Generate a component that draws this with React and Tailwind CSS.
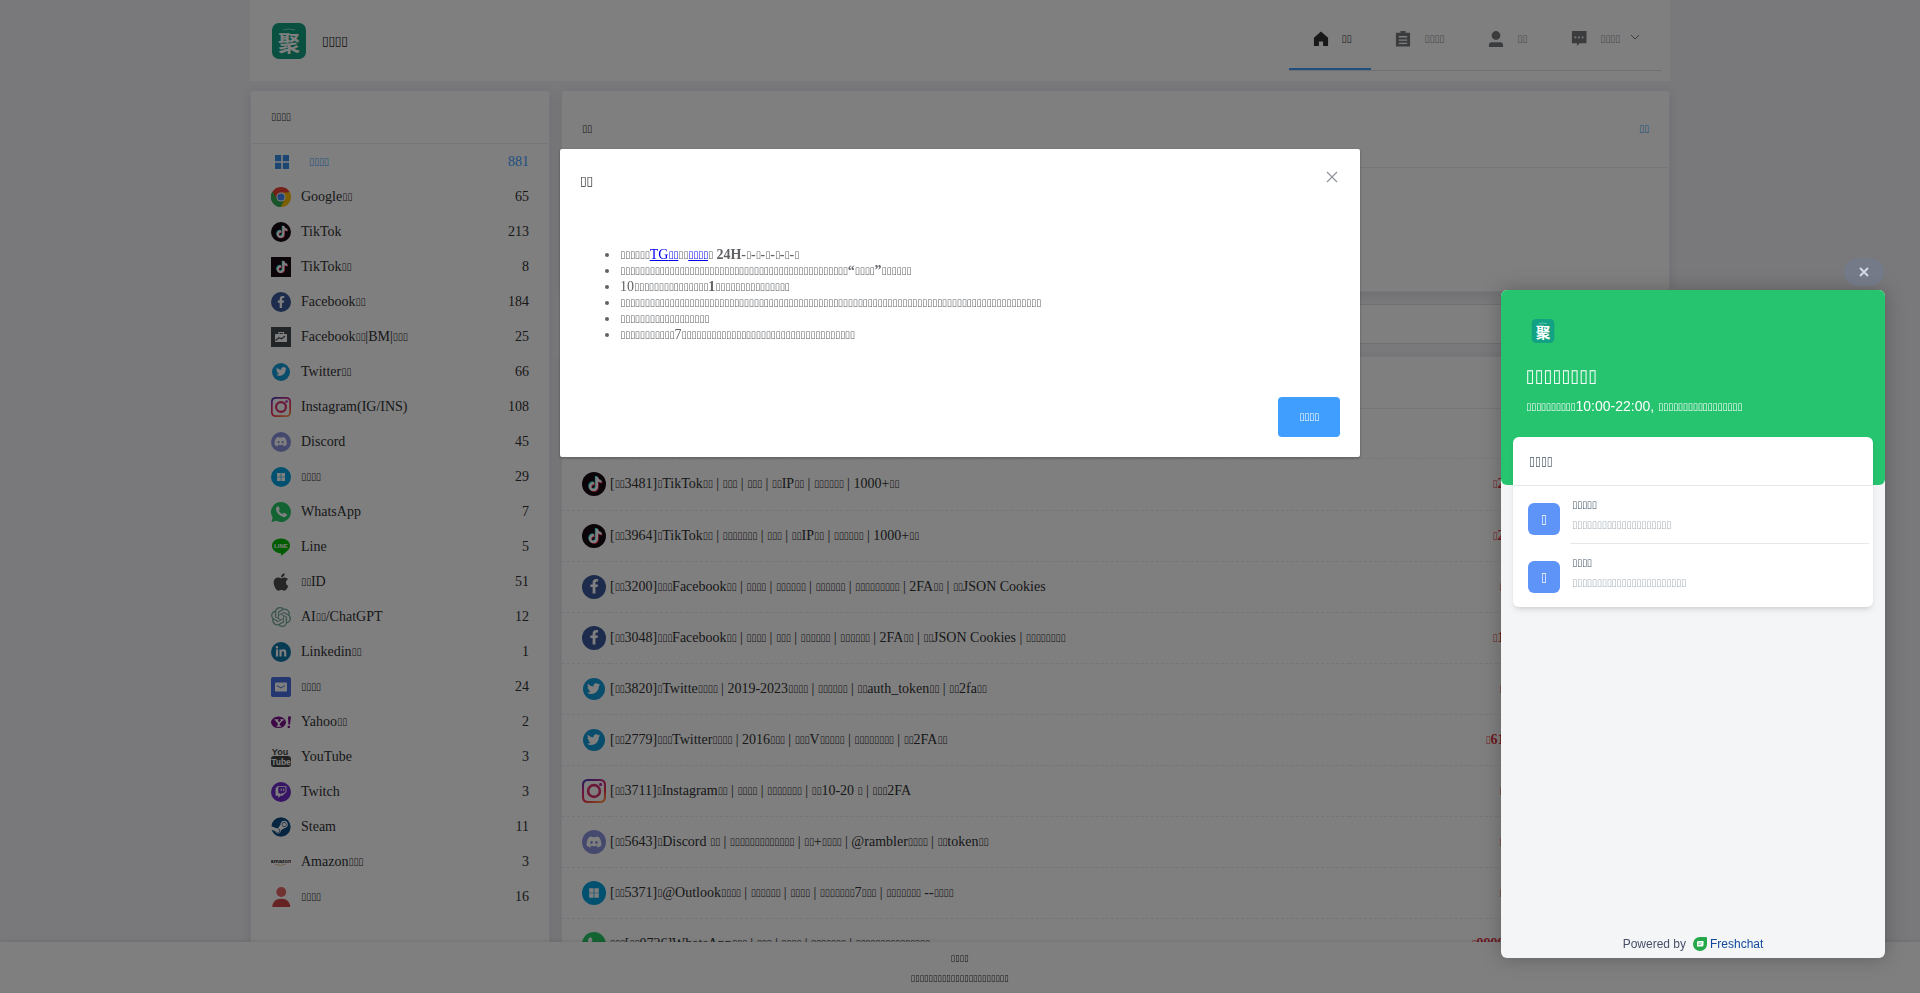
import React, { useState } from 'react';
import {
  FaApple,
  FaDiscord,
  FaFacebookF,
  FaLinkedinIn,
  FaSteam,
  FaTiktok,
  FaTwitch,
  FaTwitter,
  FaWhatsapp,
} from 'react-icons/fa';
import { SiOpenai } from 'react-icons/si';

// run of n box characters
const b = (n) => '▯'.repeat(n);

const BOX_SIZES = {
  sm: 'text-[9px] align-[1px]',
  base: 'text-[10px] align-[1px]',
  md: 'text-[12px] align-[1px]',
  lg: 'text-[13px] align-[2px]',
  xl: 'text-[18px] align-[2px]',
};

// Sets the box characters in a narrow face, the rest keeps the inherited font
function Label({ text, size = 'base' }) {
  return text.split(/(▯+)/).filter(Boolean).map((part, i) =>
    part[0] === '▯' ? (
      <span key={i} className={`font-['DejaVu_Sans_Condensed','DejaVu_Sans',sans-serif] font-normal leading-none ${BOX_SIZES[size]}`}>
        {part}
      </span>
    ) : (
      <React.Fragment key={i}>{part}</React.Fragment>
    )
  );
}

function Logo({ className }) {
  return (
    <svg viewBox="0 0 34 36" className={className} aria-hidden="true">
      <rect width="34" height="36" rx="7" fill="#12a182" />
      <path d="M11 7q6-2 12 0" fill="none" stroke="#7fd8c4" strokeWidth="1" />
      <text x="17" y="28" textAnchor="middle" fontSize="22" fontWeight="700" fill="#fff" fontFamily="'Noto Sans CJK SC', sans-serif">
        聚
      </text>
    </svg>
  );
}

function Disc({ bg, children }) {
  return <span className={`flex size-full items-center justify-center rounded-full text-white ${bg}`}>{children}</span>;
}

const TikTokMark = () => (
  <svg viewBox="0 0 20 20" className="size-full" aria-hidden="true">
    <FaTiktok x="4.4" y="3.4" size="12" color="#25f4ee" />
    <FaTiktok x="5.6" y="4.6" size="12" color="#fe2c55" />
    <FaTiktok x="5" y="4" size="12" color="#fff" />
  </svg>
);

const ICONS = {
  google: (
    <svg viewBox="0 0 48 48" className="size-full">
      <path d="M24 24 3.2 12A24 24 0 0 1 44.8 12Z" fill="#ea4335" />
      <path d="M24 24 44.8 12A24 24 0 0 1 24 48Z" fill="#fbbc05" />
      <path d="M24 24V48A24 24 0 0 1 3.2 12Z" fill="#34a853" />
      <path d="M24 13H45.3L34 29Z" fill="#fbbc05" />
      <path d="M33.5 29.5 23 48 18 32Z" fill="#34a853" />
      <path d="M14.5 29.5 3.8 11.5 22 13Z" fill="#ea4335" />
      <path d="M14.5 29.5 24 35 20 47.7A24 24 0 0 1 3.2 12Z" fill="#34a853" />
      <circle cx="24" cy="24" r="11" fill="#fff" />
      <circle cx="24" cy="24" r="8.6" fill="#4285f4" />
    </svg>
  ),
  tiktok: <Disc bg="bg-[#170a12]"><TikTokMark /></Disc>,
  tiktokSquare: <span className="block size-full bg-[#170a12]"><TikTokMark /></span>,
  facebook: <Disc bg="bg-[#3b5998]"><FaFacebookF className="size-3/5" /></Disc>,
  business: (
    <svg viewBox="0 0 20 20" className="size-full">
      <rect width="20" height="20" fill="#444b50" />
      <path d="M8 7V5.5h4.5V7" fill="none" stroke="#fff" strokeWidth="1.1" />
      <rect x="4" y="7" width="12" height="8" rx="0.6" fill="#fff" />
      <path d="M4.500 13.500 8 10.800l2.500 1 3.500-2.500" fill="none" stroke="#444b50" strokeWidth="1.2" />
    </svg>
  ),
  twitter: <span className="block size-full p-px"><Disc bg="bg-[#129bd8]"><FaTwitter className="size-3/5" /></Disc></span>,
  instagram: (
    <svg viewBox="0 0 20 20" className="size-full">
      <defs>
        <linearGradient id="ig" x1="0.7" y1="1" x2="0.2" y2="0">
          <stop offset="0" stopColor="#fd8d45" />
          <stop offset="0.3" stopColor="#f2304e" />
          <stop offset="0.7" stopColor="#c72a88" />
          <stop offset="1" stopColor="#4a3bb6" />
        </linearGradient>
      </defs>
      <rect width="20" height="20" rx="4.5" fill="url(#ig)" />
      <rect x="1.7" y="1.7" width="16.6" height="16.6" rx="3.4" fill="#fff" />
      <circle cx="10" cy="10" r="4.9" fill="none" stroke="#d9306f" strokeWidth="2.2" />
      <circle cx="15.5" cy="4.5" r="1.3" fill="#b729a8" />
    </svg>
  ),
  discord: <Disc bg="bg-[#8c93dc]"><FaDiscord className="size-2/3" /></Disc>,
  microsoft: (
    <svg viewBox="0 0 20 20" className="size-full">
      <circle cx="10" cy="10" r="10" fill="#00a1e0" />
      <path d="M6 6h3.7v3.7H6zM10.300 6H14v3.7h-3.7zM6 10.300h3.7V14H6zM10.300 10.300H14V14h-3.7z" fill="#fff" />
    </svg>
  ),
  whatsapp: (
    <svg viewBox="0 0 20 20" className="size-full">
      <path d="M10 0a10 10 0 1 1-4.8 18.8L.5 20l1.2-4.5A10 10 0 0 1 10 0Z" fill="#29c765" />
      <path d="M6.500 4.600c.5-.4 1-.3 1.300.2l.9 2c.1.400 0 .7-.3 1l-.6.800c.9 1.700 2.100 2.800 3.900 3.500l.9-1c.3-.3.6-.3.9-.2l2 1c.5.200.6.500.4 1-.4 1.300-1.500 2.100-2.900 2.100-3.700-.3-8-4.500-8-8 0-1 .6-1.900 1.500-2.400Z" fill="#fff" />
    </svg>
  ),
  line: (
    <svg viewBox="0 0 20 20" className="size-full">
      <path d="M10 1.500c5 0 9 3.100 9 7.200 0 4-4.500 6.800-9 10.300.2-1.300.4-2.500-.5-2.800C4.600 15.700 1 12.700 1 8.700 1 4.600 5 1.500 10 1.500Z" fill="#00b900" />
      <text x="10" y="11.2" textAnchor="middle" fontSize="6" fontWeight="bold" fill="#fff" fontFamily="'Liberation Sans', sans-serif">LINE</text>
    </svg>
  ),
  apple: <FaApple className="size-full text-[#4d4d4d]" />,
  openai: <SiOpenai className="size-full text-[#75a99c]" />,
  linkedin: <Disc bg="bg-[#0e76a8]"><FaLinkedinIn className="size-3/5" /></Disc>,
  mail: (
    <svg viewBox="0 0 20 20" className="size-full">
      <rect width="20" height="20" rx="2" fill="#4a6ee0" />
      <rect x="4" y="5.5" width="12" height="9" rx="1" fill="#fff" />
      <path d="M6 8.500l4 2.500 4-2.500" fill="none" stroke="#4a6ee0" strokeWidth="1" />
    </svg>
  ),
  yahoo: (
    <svg viewBox="0 0 20 20" className="size-full">
      <ellipse cx="7.5" cy="10.3" rx="7.5" ry="5.8" fill="#7b0f8a" />
      <path d="M3.500 7.200h4v1l-.9.300 1.500 1.700 2-1.900-.9-.3V7.200H13v1l-1.200.3-3 3v1.900l1.300.3v1H5.600v-1l1.200-.3v-1.800L4.300 8.500l-.8-.300Z" fill="#fff" />
      <path d="M17 4.500h3l-1 8h-1.600ZM16.700 13.800h2.200v2.200h-2.200z" fill="#7b0f8a" />
    </svg>
  ),
  youtube: (
    <svg viewBox="0 0 20 20" className="size-full">
      <text x="9" y="7.8" textAnchor="middle" fontSize="9" fontWeight="bold" fill="#444" fontFamily="'Liberation Sans Narrow', 'Liberation Sans', sans-serif">You</text>
      <rect y="9" width="20" height="11" rx="3" fill="#444" />
      <text x="10" y="18" textAnchor="middle" fontSize="8.5" fontWeight="bold" fill="#fff" fontFamily="'Liberation Sans Narrow', 'Liberation Sans', sans-serif">Tube</text>
    </svg>
  ),
  twitch: <Disc bg="bg-[#6f2ac9]"><FaTwitch className="size-3/5" /></Disc>,
  steam: <span className="block size-full overflow-hidden rounded-full bg-white"><FaSteam className="size-full text-[#0d4a80]" /></span>,
  amazon: (
    <svg viewBox="0 0 20 20" className="size-full">
      <text x="10" y="11" textAnchor="middle" fontSize="5.6" fontWeight="bold" fill="#222" fontFamily="'Liberation Sans', sans-serif">amazon</text>
      <path d="M4 12.300q5.500 2.200 10.500 0" fill="none" stroke="#c8a060" strokeWidth="0.7" />
    </svg>
  ),
  person: (
    <svg viewBox="0 0 20 20" className="size-full">
      <circle cx="10.3" cy="5" r="4.9" fill="#e36464" />
      <path d="M1.300 20c0-5 3.500-8.300 9-8.300S19.200 15 19.200 20Z" fill="#ce4646" />
    </svg>
  ),
};

const CATEGORIES = [
  { icon: 'google', name: `Google${b(2)}`, count: 65 },
  { icon: 'tiktok', name: 'TikTok', count: 213 },
  { icon: 'tiktokSquare', name: `TikTok${b(2)}`, count: 8 },
  { icon: 'facebook', name: `Facebook${b(2)}`, count: 184 },
  { icon: 'business', name: `Facebook${b(2)}|BM|${b(3)}`, count: 25 },
  { icon: 'twitter', name: `Twitter${b(2)}`, count: 66 },
  { icon: 'instagram', name: 'Instagram(IG/INS)', count: 108 },
  { icon: 'discord', name: 'Discord', count: 45 },
  { icon: 'microsoft', name: b(4), count: 29 },
  { icon: 'whatsapp', name: 'WhatsApp', count: 7 },
  { icon: 'line', name: 'Line', count: 5 },
  { icon: 'apple', name: `${b(2)}ID`, count: 51 },
  { icon: 'openai', name: `AI${b(2)}/ChatGPT`, count: 12 },
  { icon: 'linkedin', name: `Linkedin${b(2)}`, count: 1 },
  { icon: 'mail', name: b(4), count: 24 },
  { icon: 'yahoo', name: `Yahoo${b(2)}`, count: 2 },
  { icon: 'youtube', name: 'YouTube', count: 3 },
  { icon: 'twitch', name: 'Twitch', count: 3 },
  { icon: 'steam', name: 'Steam', count: 11 },
  { icon: 'amazon', name: `Amazon${b(3)}`, count: 3 },
  { icon: 'person', name: b(4), count: 16 },
];

const PRODUCTS = [
  { icon: 'tiktok', price: '25.0', name: `[${b(2)}3481]${b(1)}TikTok${b(2)} | ${b(3)} | ${b(3)} | ${b(2)}IP${b(2)} | ${b(6)} | 1000+${b(2)}` },
  { icon: 'tiktok', price: '25.0', name: `[${b(2)}3964]${b(1)}TikTok${b(2)} | ${b(7)} | ${b(3)} | ${b(2)}IP${b(2)} | ${b(6)} | 1000+${b(2)}` },
  { icon: 'facebook', price: '8.0', name: `[${b(2)}3200]${b(3)}Facebook${b(2)} | ${b(4)} | ${b(6)} | ${b(6)} | ${b(9)} | 2FA${b(2)} | ${b(2)}JSON Cookies` },
  { icon: 'facebook', price: '15.0', name: `[${b(2)}3048]${b(3)}Facebook${b(2)} | ${b(4)} | ${b(3)} | ${b(6)} | ${b(6)} | 2FA${b(2)} | ${b(2)}JSON Cookies | ${b(8)}` },
  { icon: 'twitter', price: '3.0', name: `[${b(2)}3820]${b(1)}Twitte${b(4)} | 2019-2023${b(4)} | ${b(6)} | ${b(2)}auth_token${b(2)} | ${b(2)}2fa${b(2)}` },
  { icon: 'twitter', price: '615.0', name: `[${b(2)}2779]${b(3)}Twitter${b(4)} | 2016${b(3)} | ${b(3)}V${b(5)} | ${b(8)} | ${b(2)}2FA${b(2)}` },
  { icon: 'instagram', price: '5.0', name: `[${b(2)}3711]${b(1)}Instagram${b(2)} | ${b(4)} | ${b(7)} | ${b(2)}10-20 ${b(1)} | ${b(3)}2FA` },
  { icon: 'discord', price: '4.0', name: `[${b(2)}5643]${b(1)}Discord ${b(2)} | ${b(13)} | ${b(2)}+${b(4)} | @rambler${b(4)} | ${b(2)}token${b(2)}` },
  { icon: 'microsoft', price: '1.0', name: `[${b(2)}5371]${b(1)}@Outlook${b(4)} | ${b(6)} | ${b(4)} | ${b(7)}7${b(3)} | ${b(7)} --${b(4)}` },
  { icon: 'whatsapp', price: '9999.00', name: `${b(3)}[${b(2)}0726]WhatsApp${b(3)} | ${b(3)} | ${b(4)} | ${b(7)} | ${b(15)}` },
];

const CHANNELS = [
  { title: b(5), text: b(20) },
  { title: b(4), text: b(23) },
];

const NAV_ICONS = {
  home: <path d="M12 3 3.500 10.500v10h6v-5.500h5v5.500h6v-10Z" />,
  orders: <path fillRule="evenodd" d="M9 2.500h6V4.500h5.500v16.500h-17V4.500H9ZM7 8.500v1.600h10V8.500Zm0 4v1.600h10v-1.600Zm0 4v1.600h10v-1.600Z" />,
  user: <path d="M12 2.500a5.300 5.300 0 1 1 0 10.600 5.300 5.300 0 0 1 0-10.600ZM3.500 21.500V19.500q0-3.500 3.500-3.500h10q3.500 0 3.500 3.500v2Z" />,
  chat: <path fillRule="evenodd" d="M3.500 2.500h17.500v14.500H13L9.500 20v-3H3.500Zm3.200 6.500v2h2V9Zm4.300 0v2h2V9Zm4.300 0v2h2V9Z" />,
};

const NAV = [
  { icon: 'home', label: b(2), active: true },
  { icon: 'orders', label: b(4) },
  { icon: 'user', label: b(2) },
  { icon: 'chat', label: b(4), submenu: true },
];

function Header() {
  return (
    <header className="flex h-[81px] justify-between bg-white pl-[22px] pr-[9px]">
      <div className="flex items-center gap-4">
        <Logo className="h-9 w-[34px]" />
        <h1 className="text-lg text-[#222]"><Label text={b(4)} size="lg" /></h1>
      </div>
      <nav className="mt-2.5 flex h-[61px] border-b border-[#dcdfe6]">
        {NAV.map((item) => (
          <a
            key={item.icon}
            href="#"
            className={`flex items-center gap-[9px] border-b-2 px-5 ${item.active ? 'border-[#409eff] text-[#303133]' : 'border-transparent text-[#909399]'}`}
          >
            <svg viewBox="0 0 24 24" className={`size-6 p-0.5 ${item.active ? 'text-[#303133]' : 'text-[#77797d]'}`} fill="currentColor">
              {NAV_ICONS[item.icon]}
            </svg>
            <span><Label text={item.label} /></span>
            {item.submenu && (
              <svg viewBox="0 0 12 12" className="mb-1 size-3 text-[#77797d]" fill="none" stroke="currentColor">
                <path d="M2 4l4 4 4-4" />
              </svg>
            )}
          </a>
        ))}
      </nav>
    </header>
  );
}

function Sidebar() {
  return (
    <aside className="w-[300px] shrink-0 rounded border border-[#ebeef5] bg-white pb-40 shadow-[0_2px_12px_rgba(0,0,0,0.1)]">
      <h2 className="flex h-[53px] items-center border-b border-[#ebeef5] px-5 text-[#303133]"><Label text={b(4)} /></h2>
      <ul>
        <li>
          <a href="#" className="flex h-[35px] items-center px-5 text-[#409eff]">
            <svg viewBox="0 0 14 14" className="ml-1 mr-5 size-3.5" fill="#3a8ee6">
              <path d="M0 0h6.200v6.200H0zM7.800 0H14v6.200H7.800zM0 7.800h6.200V14H0zM7.800 7.800H14V14H7.800z" />
            </svg>
            <span><Label text={b(4)} /></span>
            <span className="ml-auto">881</span>
          </a>
        </li>
        {CATEGORIES.map((c) => (
          <li key={c.icon}>
            <a href="#" className="flex h-[35px] items-center px-5 text-[#303133]">
              <span className="mr-2.5 size-5">{ICONS[c.icon]}</span>
              <span><Label text={c.name} /></span>
              <span className="ml-auto">{c.count}</span>
            </a>
          </li>
        ))}
      </ul>
    </aside>
  );
}

function ProductTable() {
  return (
    <section className="rounded border border-[#ebeef5] bg-white shadow-[0_2px_12px_rgba(0,0,0,0.1)]">
      <div className="h-[52px] border-b border-[#ebeef5]" />
      <div className="h-[50px] border-b border-dashed border-[#ebeef5]" />
      <table className="w-full">
        <tbody>
          {PRODUCTS.map((p) => (
            <tr key={p.name} className="h-[51px] border-b border-dashed border-[#e8eaf0] text-[#303133]">
              <td className="w-12 pl-5">
                <span className="block size-6">{ICONS[p.icon]}</span>
              </td>
              <td><Label text={p.name} /></td>
              <td className="pr-[147px] text-right font-bold text-[#dc3545]"><Label text={b(1) + p.price} /></td>
            </tr>
          ))}
        </tbody>
      </table>
    </section>
  );
}

function NoticeDialog({ onClose }) {
  return (
    <div role="dialog" aria-modal="true" className="fixed inset-x-0 top-[149px] z-20 mx-auto w-[800px] rounded-xs bg-white shadow-[0_1px_3px_rgba(0,0,0,0.3)]">
      <div className="flex items-start justify-between px-5 pt-5">
        <h2 className="text-lg leading-6 text-[#303133]"><Label text={b(2)} size="lg" /></h2>
        <button type="button" aria-label="Close" onClick={onClose} className="text-[#909399]">
          <svg viewBox="0 0 16 16" className="size-4" fill="none" stroke="currentColor" strokeWidth="1.2">
            <path d="M3 3l10 10M13 3 3 13" />
          </svg>
        </button>
      </div>
      <ul className="list-disc pb-[54px] pl-[60px] pr-5 pt-[54px] leading-4 text-[#606266]">
        <li>
          <Label text={b(6)} />
          <a href="#" className="text-[#0000ee] underline"><Label text={`TG${b(2)}`} /></a>
          <Label text={b(2)} />
          <a href="#" className="text-[#0000ee] underline"><Label text={b(4)} /></a>
          <Label text={b(1)} />
          <strong><Label text={` 24H-${b(1)}-${b(1)}-${b(1)}-${b(1)}-${b(1)}-${b(1)}`} /></strong>
        </li>
        <li><Label text={b(46)} /><strong><Label text={`“${b(4)}”`} /></strong><Label text={b(6)} /></li>
        <li><Label text={`10${b(15)}`} /><strong>1</strong><Label text={b(15)} /></li>
        <li><Label text={b(85)} /></li>
        <li><Label text={b(18)} /></li>
        <li><Label text={`${b(11)}7${b(35)}`} /></li>
      </ul>
      <div className="flex justify-end px-5 pb-5">
        <button type="button" onClick={onClose} className="h-10 rounded bg-[#409eff] px-[21px] text-white"><Label text={b(4)} /></button>
      </div>
    </div>
  );
}

function ChatWidget() {
  return (
    <section className="fixed bottom-[35px] right-[35px] z-30 flex h-[668px] w-96 flex-col rounded-md bg-[#f3f5f7] font-['Liberation_Sans',sans-serif] shadow-[0_0_20px_rgba(0,0,0,0.25)]">
      <button type="button" aria-label="Close chat" className="absolute -top-8 right-px flex h-7 w-10 items-center justify-center rounded-full bg-[#6f7c94]/50 text-[#d5d9e2]">
        <svg viewBox="0 0 10 10" className="size-2.5" fill="none" stroke="currentColor" strokeWidth="2">
          <path d="M1 1l8 8M9 1 1 9" />
        </svg>
      </button>
      <div className="h-[195px] shrink-0 rounded-md bg-[#27c46f] px-[25px] pt-[29px] text-white">
        <Logo className="ml-[5px] size-6" />
        <h2 className="mt-[17px] text-2xl leading-8"><Label text={b(8)} size="xl" /></h2>
        <p className="mt-1 leading-5"><Label text={`${b(10)}10:00-22:00, ${b(17)}`} /></p>
      </div>
      <div className="relative mx-3 -mt-12 h-[170px] rounded-md bg-white shadow-md">
        <h3 className="flex h-[49px] items-center border-b border-[#e5e7ea] px-4 text-base text-[#475867]"><Label text={b(4)} size="md" /></h3>
        <ul>
          {CHANNELS.map((c, i) => (
            <li key={c.title} className="flex h-[58px] items-center pl-[15px] pr-1">
              <span className="mt-2 flex size-8 items-center justify-center rounded-md bg-[#5e94f8] text-white"><Label text={b(1)} size="md" /></span>
              <a href="#" className={`ml-2.5 h-[58px] flex-1 pl-0.5 pt-2 leading-5 ${i === 0 ? 'border-b border-[#e5e7ea]' : ''}`}>
                <span className="block text-[#475867]"><Label text={c.title} /></span>
                <span className="block text-[#a5b0b8]"><Label text={c.text} /></span>
              </a>
            </li>
          ))}
        </ul>
      </div>
      <p className="mt-auto flex items-center justify-center pb-1.5 text-xs text-[#475067]">
        Powered by
        <svg viewBox="0 0 14 14" className="ml-[7px] mr-[3px] size-3.5" aria-hidden="true">
          <path d="M7 0h6q1 0 1 1v6a7 7 0 1 1-7-7Z" fill="#25a84a" />
          <path d="M5 4h5.500v4q0 1.500-1.500 1.500H4V5.500Q4 4 5 4Z" fill="#fff" />
          <path d="M5.300 6h3.700M5.300 7.500h2.500" stroke="#25a84a" strokeWidth="0.6" />
        </svg>
        <a href="#" className="text-[#12499b]">Freshchat</a>
      </p>
    </section>
  );
}

export default function App() {
  const [noticeOpen, setNoticeOpen] = useState(true);

  return (
    <div className="h-screen overflow-hidden bg-[#f3f3f8] font-['Liberation_Serif',serif] text-sm">
      <div className="mx-auto max-w-[1420px]">
        <Header />
        <div className="mt-[9px] flex gap-[11px]">
          <Sidebar />
          <main className="flex min-w-0 flex-1 flex-col gap-3">
            <section className="h-[202px] rounded border border-[#ebeef5] bg-white shadow-[0_2px_12px_rgba(0,0,0,0.1)]">
              <div className="flex h-[77px] items-center justify-between border-b border-[#ebeef5] px-5">
                <h2 className="text-[#303133]"><Label text={b(2)} /></h2>
                <a href="#" className="text-[#409eff]"><Label text={b(2)} /></a>
              </div>
            </section>
            <div className="h-10 border-y border-[#dcdfe6] bg-white" />
            <ProductTable />
          </main>
        </div>
      </div>

      <footer className="fixed inset-x-0 bottom-0 h-[51px] bg-white pt-1.5 text-center text-xs leading-5 text-[#303133] shadow-[0_-1px_4px_rgba(0,0,0,0.1)]">
        <p><Label text={b(4)} size="sm" /></p>
        <p><Label text={b(22)} size="sm" /></p>
      </footer>

      {noticeOpen && (
        <>
          <div className="fixed inset-0 z-10 bg-black/50" />
          <NoticeDialog onClose={() => setNoticeOpen(false)} />
        </>
      )}
      <ChatWidget />
    </div>
  );
}
